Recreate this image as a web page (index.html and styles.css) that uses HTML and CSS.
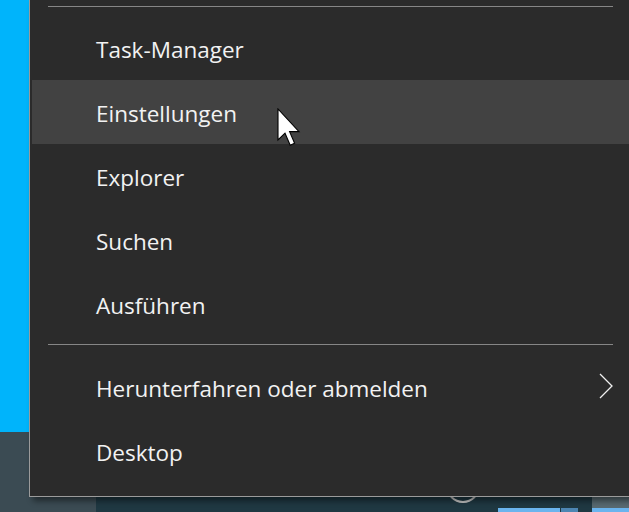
FILE: index.html
```html
<!DOCTYPE html>
<html lang="de">
<head>
<meta charset="utf-8">
<title>Startmenü</title>
<link rel="stylesheet" href="styles.css">
</head>
<body>
<div class="screen">
  <div class="desktop"></div>
  <div class="taskbar">
    <div class="start-area"></div>
    <div class="tb-main">
      <div class="cortana"></div>
      <div class="tb-apps">
        <div class="app app-a"></div>
        <div class="app app-b"></div>
        <div class="app-gap"></div>
        <div class="app app-c"></div>
      </div>
    </div>
  </div>

  <div class="menu">
    <div class="sep"></div>
    <div class="item">Task-Manager</div>
    <div class="item hover">Einstellungen</div>
    <div class="item">Explorer</div>
    <div class="item">Suchen</div>
    <div class="item">Ausführen</div>
    <div class="sep sep-mid"></div>
    <div class="item sub">Herunterfahren oder abmelden
      <svg class="chev" width="14" height="26" viewBox="0 0 14 26"><path d="M1 1 L13 13 L1 25" fill="none" stroke="#f0f0f0" stroke-width="1.3"/></svg>
    </div>
    <div class="item">Desktop</div>
  </div>

  <svg class="cursor" width="26" height="40" viewBox="0 0 13 20"><path d="M0.5 0.5 L0.5 16 L4 12.6 L6.6 18.6 L8.8 17.6 L6.3 11.8 L11 11.8 Z" fill="#fff" stroke="#000" stroke-width="0.55" stroke-linejoin="miter"/></svg>
</div>
</body>
</html>
```
FILE: styles.css
```css
html, body {
  margin: 0;
  padding: 0;
  background: #1f3842;
}
.screen {
  position: relative;
  width: 629px;
  height: 512px;
  overflow: hidden;
  display: flex;
  flex-direction: column;
  font-family: "Open Sans", "Noto Sans", sans-serif;
}
.desktop {
  height: 432px;
  background: #00b4fb;
}
.taskbar {
  flex: 1;
  display: flex;
  background: #1f3842;
}
.start-area {
  width: 96px;
  background: #3b4b53;
}
.tb-main {
  flex: 1;
  position: relative;
}
.cortana {
  position: absolute;
  left: 350px;
  top: 37px;
  width: 30px;
  height: 30px;
  border-radius: 50%;
  border: 2px solid #c8c8c8;
}
.tb-apps {
  position: absolute;
  left: 402px;
  top: 65px;
  right: 0;
  height: 15px;
  display: flex;
  align-items: flex-end;
}
.app {
  height: 4px;
}
.app-a { width: 62px; background: #6ab4ee; }
.app-b { width: 17px; background: #4d86b3; margin-left: 1px; }
.app-gap { width: 14px; }
.app-c {
  flex: 1;
  height: 15px;
  background: linear-gradient(#586a71 0 11px, #6ab4ee 11px);
}

.menu {
  position: absolute;
  left: 29px;
  top: 0;
  width: 601px;
  border-left: 1px solid #9b9b9b;
  border-bottom: 1px solid #9b9b9b;
  border-right: 1px solid #9b9b9b;
  background: #2b2b2b;
  padding: 6px 0 13px;
  box-shadow: 4px 4px 6px rgba(0, 0, 0, 0.45);
  color: #f2f2f2;
  font-size: 22.5px;
}
.sep {
  height: 1px;
  background: #868686;
  margin: 0 18px 9px;
}
.sep-mid {
  margin: 8px 18px 10px;
}
.item {
  height: 64px;
  margin: 0 2px;
  padding-left: 64px;
  padding-top: 2px;
  box-sizing: border-box;
  display: flex;
  align-items: center;
  position: relative;
}
.item.hover {
  background: #424242;
}
.chev {
  position: absolute;
  left: 567px;
  top: 18px;
}
.cursor {
  position: absolute;
  left: 277px;
  top: 108px;
}
```
